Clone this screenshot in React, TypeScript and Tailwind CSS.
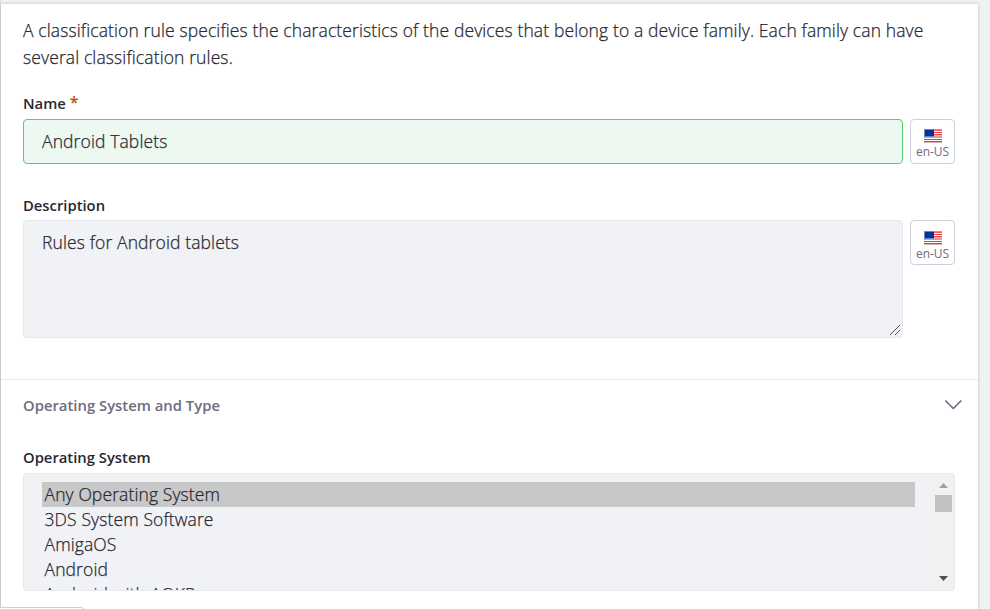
import React from "react";

function Flag() {
  return (
    <svg width="18" height="14" viewBox="0 0 18 14" shapeRendering="crispEdges" className="block">
      <rect width="18" height="14" fill="#fff" />
      <rect width="18" height="1" fill="#d9929b" />
      <rect y="1" width="18" height="1" fill="#f4595c" />
      <rect y="3" width="18" height="1" fill="#e23a3e" />
      <rect y="5" width="18" height="1" fill="#e4474a" />
      <rect y="6" width="18" height="1" fill="#f0b0b2" />
      <rect y="7" width="18" height="2" fill="#e5999c" />
      <rect y="10" width="18" height="1" fill="#e23a3e" />
      <rect y="12" width="18" height="1" fill="#e23a3e" />
      <rect y="13" width="18" height="1" fill="#dfaeb2" />
      <rect width="10" height="8" fill="#6f86bd" />
      <rect x="1" y="1" width="9" height="6" fill="#0033a0" />
    </svg>
  );
}

function LocaleButton({ low = false }: { low?: boolean }) {
  return (
    <button
      className={
        "flex h-[45px] w-[45px] shrink-0 flex-col items-center rounded-[4px] border border-[#cdced9] bg-white " +
        (low ? "pt-[10px]" : "pt-[9px]")
      }
    >
      <Flag />
      <span className="mt-[2px] whitespace-nowrap text-[12px] font-normal leading-[14px] tracking-[-0.1px] text-[#6b6c7e] [-webkit-text-stroke:0]">en-US</span>
    </button>
  );
}

const options = ["Any Operating System", "3DS System Software", "AmigaOS", "Android", "Android with AOKP"];

export default function App() {
  return (
    <div className="h-[609px] w-[990px] overflow-hidden bg-[#f0f1f5] pl-px pt-[4px] font-['Open_Sans','Noto_Sans',sans-serif] text-[17.5px] font-light tracking-[0.115px] text-[#272833] shadow-[inset_1px_0_0_#dcdde3] [-webkit-text-stroke:0.25px]">
      <main className="relative flex h-[605px] w-[977px] flex-col bg-white shadow-[0_0_3px_rgba(0,0,0,0.22)]">
        <section className="h-[375px] shrink-0 px-[22px] pt-[13px]">
          <p className="whitespace-nowrap leading-[27px]">
            <span className="block">A classification rule specifies the characteristics of the devices that belong to a device family. Each family can have</span>
            <span className="block">several classification rules.</span>
          </p>
          <label className="mt-[22px] flex h-[21px] items-center text-[14.8px] font-semibold leading-[21px] tracking-normal [-webkit-text-stroke:0]">
            Name<span className="-mt-[2px] ml-1 text-[16px] text-[#b95000]">*</span>
          </label>
          <div className="mt-[5px] flex gap-[7px]">
            <input
              defaultValue="Android Tablets"
              className="h-[45px] w-[880px] rounded-[4px] border border-[#5aca75] bg-[#edf8f0] px-[18px] pb-[2px] outline-none"
            />
            <LocaleButton />
          </div>
          <label className="mt-[31px] block text-[14.8px] font-semibold leading-[21px] tracking-normal [-webkit-text-stroke:0]">Description</label>
          <div className="mt-[4px] flex gap-[7px]">
            <div className="flex h-[118px] w-[880px] items-start justify-between rounded-[4px] border border-[#e7e7ed] bg-[#f1f2f5] pl-[18px] pt-[8px]">
              <span className="leading-[27px]">Rules for Android tablets</span>
              <svg width="12" height="12" viewBox="0 0 12 12" className="mb-px mr-px self-end" stroke="#555" shapeRendering="crispEdges">
                <path d="M1 11L11 1M6 11L11 6" />
              </svg>
            </div>
            <LocaleButton low />
          </div>
        </section>
        <section className="border-t border-[#e7e7ed] px-[22px]">
          <header className="mt-[15px] flex h-[21px] items-center justify-between">
            <h3 className="text-[14.8px] font-semibold tracking-[0.02px] text-[#6b6c7e] [-webkit-text-stroke:0]">Operating System and Type</h3>
            <svg width="18" height="12" viewBox="0 0 18 12" className="-mr-[7px] -mt-[2px]" fill="none" stroke="#6b6c7e" strokeWidth="1.7">
              <path d="M0.8 2L8.3 9.5L15.8 2" strokeLinecap="round" strokeLinejoin="round" />
            </svg>
          </header>
          <label className="mt-[31px] block text-[14.8px] font-semibold leading-[21px] tracking-normal [-webkit-text-stroke:0]">Operating System</label>
          <div className="mt-[5px] flex h-[118px] w-[932px] justify-between overflow-hidden rounded-[4px] border border-[#e7e7ed] bg-[#f1f2f5] pl-[18px]">
            <ul className="mt-[8px] w-[873px]">
              {options.map((o, i) => (
                <li key={o} className={i === 0 ? "h-[25px] bg-[#c8c8c8] pl-[2.5px] leading-[25px]" : "h-[25px] pl-[2.5px] leading-[25px]"}>
                  {o}
                </li>
              ))}
            </ul>
            <div className="flex w-[21px] flex-col items-center bg-[#f1f1f1]">
              <svg width="9" height="5" viewBox="0 0 9 5" className="mt-[9px]"><path d="M0 5L4.5 0L9 5Z" fill="#a3a3a3" /></svg>
              <div className="mt-[7px] h-[17px] w-[17px] bg-[#c1c1c1]" />
              <svg width="9" height="5" viewBox="0 0 9 5" className="mb-[9px] mt-auto"><path d="M0 0H9L4.5 5Z" fill="#505050" /></svg>
            </div>
          </div>
        </section>
        <div className="absolute -left-[5px] top-[603px] h-4 w-[89px] rounded-tr-[4px] border border-[#cfcfd2] bg-white" />
      </main>
    </div>
  );
}
